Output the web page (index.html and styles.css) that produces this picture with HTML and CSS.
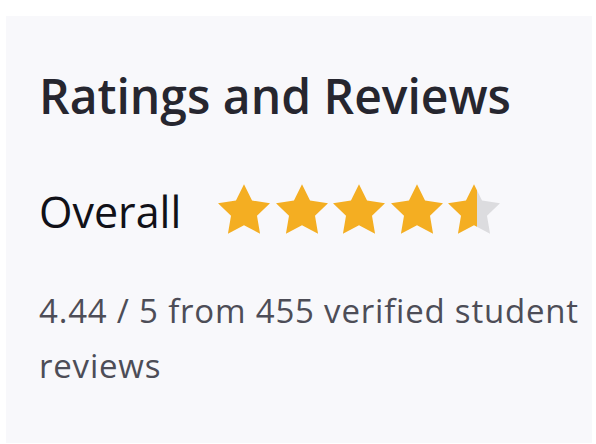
FILE: index.html
```html
<!DOCTYPE html>
<html lang="en">
<head>
  <meta charset="UTF-8" />
  <meta name="viewport" content="width=device-width, initial-scale=1.0"/>
  <title>Ratings and Reviews</title>
  <link rel="stylesheet" href="styles.css">
</head>
<body>
  <div class="card">
    <h1 class="title">Ratings and Reviews</h1>

    <div class="overall">
      <span class="overall-label">Overall</span>
      <div class="stars">
        <svg class="star" viewBox="2 2 20 19.02"><path class="full" d="M12 2l3.09 6.26L22 9.27l-5 4.87 1.18 6.88L12 17.77l-6.18 3.25L7 14.14 2 9.27l6.91-1.01L12 2z"/></svg>
        <svg class="star" viewBox="2 2 20 19.02"><path class="full" d="M12 2l3.09 6.26L22 9.27l-5 4.87 1.18 6.88L12 17.77l-6.18 3.25L7 14.14 2 9.27l6.91-1.01L12 2z"/></svg>
        <svg class="star" viewBox="2 2 20 19.02"><path class="full" d="M12 2l3.09 6.26L22 9.27l-5 4.87 1.18 6.88L12 17.77l-6.18 3.25L7 14.14 2 9.27l6.91-1.01L12 2z"/></svg>
        <svg class="star" viewBox="2 2 20 19.02"><path class="full" d="M12 2l3.09 6.26L22 9.27l-5 4.87 1.18 6.88L12 17.77l-6.18 3.25L7 14.14 2 9.27l6.91-1.01L12 2z"/></svg>
        <svg class="star" viewBox="2 2 20 19.02">
          <defs>
            <linearGradient id="partial">
              <stop offset="55%" stop-color="#f4ae22"/>
              <stop offset="55%" stop-color="#dcdcdf"/>
            </linearGradient>
          </defs>
          <path fill="url(#partial)" d="M12 2l3.09 6.26L22 9.27l-5 4.87 1.18 6.88L12 17.77l-6.18 3.25L7 14.14 2 9.27l6.91-1.01L12 2z"/>
        </svg>
      </div>
    </div>

    <p class="summary">4.44 / 5 from 455 verified student reviews</p>
  </div>
</body>
</html>
```

FILE: styles.css
```css
body {
  margin: 0;
  background: #ffffff;
  font-family: "Open Sans", Lato, sans-serif;
}
.card {
  margin: 16px 4px 0 6px;
  padding: 1px 10px 0 33px;
  min-height: 427px;
  background: #f8f8fb;
  box-sizing: border-box;
}
.title {
  margin: 51px 0 0;
  font-size: 48px;
  font-weight: 600;
  line-height: 56px;
  color: #26262f;
}
.overall {
  display: flex;
  align-items: center;
  gap: 37px;
  margin-top: 60px;
}
.overall-label {
  font-size: 43px;
  line-height: 50px;
  color: #111118;
}
.stars {
  display: flex;
  gap: 5.5px;
  margin-bottom: 6px;
}
.star {
  width: 52px;
  height: 50px;
}
.star .full {
  fill: #f4ae22;
}
.summary {
  margin: 43px 0 0;
  font-size: 33px;
  letter-spacing: 0.8px;
  line-height: 55px;
  color: #4d4d57;
}
```
